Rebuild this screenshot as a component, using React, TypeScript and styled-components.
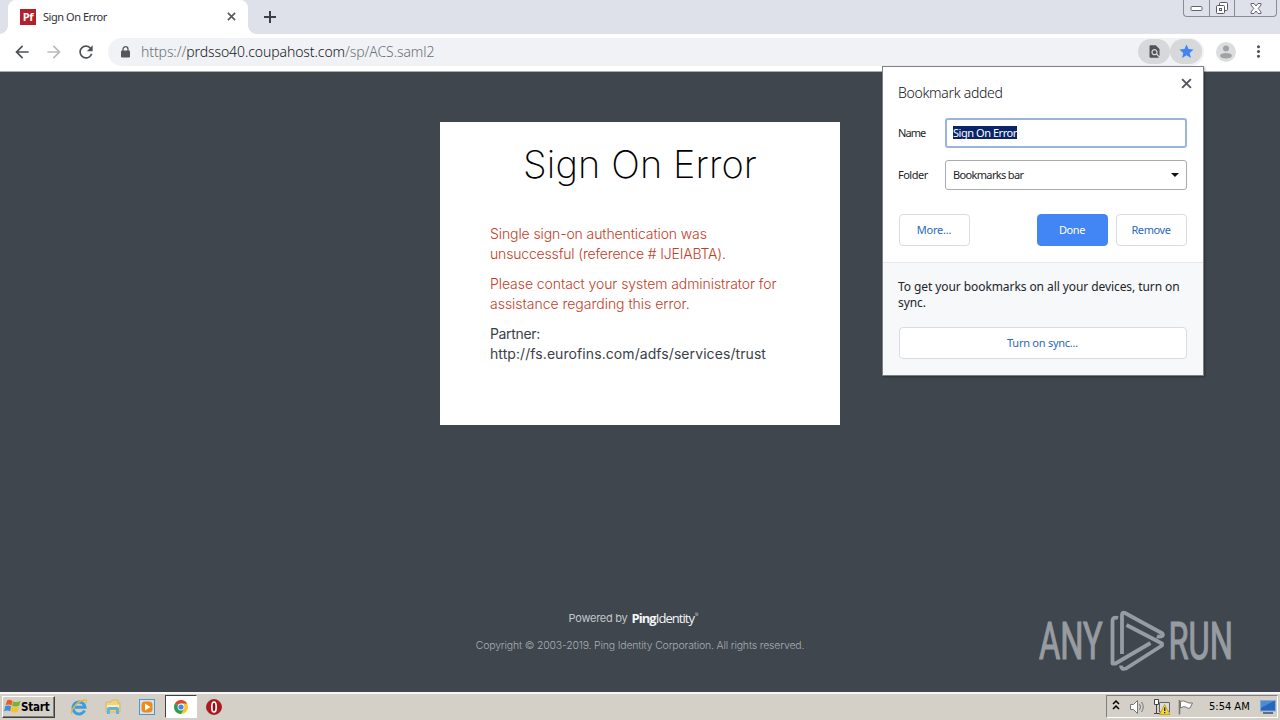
import { ReactNode } from 'react';
import styled, { createGlobalStyle } from 'styled-components';
import {
   MdArrowBack,
   MdArrowForward,
   MdFindInPage,
   MdMoreVert,
   MdRefresh,
   MdStar,
} from 'react-icons/md';

const uiFont = "'Noto Sans', 'Open Sans', sans-serif";
const pageFont = "'Inter', 'Open Sans', sans-serif";
const classicFont = "'DejaVu Sans Condensed', 'DejaVu Sans', sans-serif";

const GlobalStyle = createGlobalStyle`
   * { box-sizing: border-box; }
   body { margin: 0; overflow: hidden; }
   button { font: inherit; }
`;

const Screen = styled.div`
   width: 1280px;
   height: 720px;
   display: flex;
   flex-direction: column;
   position: relative;
   overflow: hidden;
   background: #3f464d;
   font-family: ${uiFont};
`;

const Text = styled.span<{ $spacing?: number }>`
   letter-spacing: ${({ $spacing = 0 }) => $spacing}px;
   white-space: nowrap;
`;

const CrossIcon = styled.svg<{ $size: number }>`
   width: ${({ $size }) => $size}px;
   height: ${({ $size }) => $size}px;
   flex: none;
   fill: none;
   stroke: #55595e;
   stroke-width: 1.8px;
`;

/* ---------- tab strip ---------- */

const TabStrip = styled.header`
   height: 34px;
   flex: none;
   display: flex;
   align-items: flex-start;
   background: #dee1e9;
   padding: 0 4px 0 8px;
`;

const Tab = styled.div`
   width: 240px;
   height: 34px;
   display: flex;
   align-items: center;
   padding: 0 12px 1px 12px;
   background: #fff;
   border-radius: 8px 8px 0 0;
   font-size: 11px;
   color: #2f3136;
   position: relative;

   &::before,
   &::after {
      content: '';
      position: absolute;
      bottom: 0;
      width: 8px;
      height: 8px;
   }
   &::before {
      left: -8px;
      background: radial-gradient(circle at 0 0, transparent 7.5px, #fff 8px);
   }
   &::after {
      right: -8px;
      background: radial-gradient(circle at 100% 0, transparent 7.5px, #fff 8px);
   }
   ${CrossIcon} {
      margin-left: auto;
   }
`;

const Favicon = styled.div`
   width: 16px;
   height: 16px;
   margin-right: 7px;
   background: #b3202c;
   color: #fff;
   font: bold 11px/16px 'Open Sans', sans-serif;
   text-align: center;
`;

const NewTab = styled.svg`
   width: 12px;
   height: 12px;
   margin: 11px auto 0 16px;
`;

const WindowButtons = styled.div`
   display: flex;
   width: 94px;
   height: 17px;
   border: 1px solid #878c98;
   border-top: 0;
   border-radius: 0 0 4px 4px;
   margin-right: -1px;
`;

const WindowButton = styled.div<{ $width: number }>`
   width: ${({ $width }) => $width}px;
   display: flex;
   justify-content: center;
   align-items: center;
   & + & {
      border-left: 1px solid #878c98;
   }
`;

/* ---------- toolbar ---------- */

const Toolbar = styled.nav`
   height: 38px;
   flex: none;
   display: flex;
   align-items: center;
   padding: 0 12px 2px;
   background: #fff;
   border-bottom: 1px solid #a9adb1;
`;

const NavIcon = styled.div<{ $muted?: boolean }>`
   width: 32px;
   display: flex;
   color: ${({ $muted }) => ($muted ? '#b9bbbd' : '#4e5256')};
   svg {
      width: 20px;
      height: 20px;
   }
`;

const AddressBar = styled.div`
   width: 1096px;
   height: 28px;
   display: flex;
   align-items: center;
   padding: 0 2px 0 11px;
   border-radius: 14px;
   background: #f0f2f5;
   font-size: 14px;
   font-weight: 300;
   color: #6c7075;
`;

const LockIcon = styled.svg`
   width: 9px;
   height: 12px;
   margin: 0 11px 0 2px;
`;

const Host = styled.span`
   color: #15171a;
`;

const Pills = styled.div`
   margin-left: auto;
   display: flex;
`;

const Pill = styled.div<{ $active?: boolean }>`
   width: 32px;
   height: 25px;
   display: flex;
   align-items: center;
   justify-content: center;
   border-radius: 13px;
   background: #d6d8da;
   color: ${({ $active }) => ($active ? '#4284f4' : '#505458')};
   svg {
      width: ${({ $active }) => ($active ? 17 : 15)}px;
      height: ${({ $active }) => ($active ? 17 : 15)}px;
   }
`;

const Avatar = styled.svg`
   width: 20px;
   height: 20px;
   margin-left: 12px;
`;

const Menu = styled(MdMoreVert)`
   width: 19px;
   height: 19px;
   margin-left: 13px;
   color: #505458;
   flex: none;
`;

/* ---------- page ---------- */

const Page = styled.main`
   height: 620px;
   flex: none;
   display: flex;
   flex-direction: column;
   align-items: center;
   padding-top: 50px;
   font-family: ${pageFont};
`;

const Card = styled.section`
   width: 400px;
   height: 303px;
   padding: 18px 50px 0;
   background: #fff;
`;

const CardTitle = styled.h1`
   margin: 0 0 36px;
   font-size: 38px;
   line-height: 48px;
   font-weight: 250;
   text-align: center;
   color: #000;
   white-space: nowrap;
`;

const Message = styled.p<{ $error?: boolean }>`
   margin: 0 0 10px;
   font-size: 14px;
   line-height: 20px;
   font-weight: ${({ $error }) => ($error ? 350 : 400)};
   color: ${({ $error }) => ($error ? '#c2401f' : '#3b4148')};
   ${Text} {
      display: block;
   }
`;

const PoweredBy = styled.div`
   margin: 185px 13px 0 0;
   height: 16px;
   display: flex;
   align-items: center;
   gap: 4px;
   font-size: 11px;
   color: #c3c6ca;
`;

const PingLogo = styled.span`
   display: flex;
   align-items: center;
   font: 400 13px/16px 'Open Sans', sans-serif;
   color: #f4f5f6;
   b {
      font-weight: 700;
   }
   sup {
      font-size: 4px;
      line-height: 4px;
      align-self: flex-start;
      margin: 3px 0 0 1px;
   }
`;

const Copyright = styled.div`
   margin-top: 12px;
   font-size: 10.5px;
   line-height: 16px;
   font-weight: 300;
   color: #a9adb2;
`;

/* ---------- bookmark bubble ---------- */

const Bubble = styled.aside`
   position: absolute;
   left: 882px;
   top: 66px;
   width: 322px;
   height: 310px;
   display: flex;
   flex-direction: column;
   background: #fff;
   border: 1px solid #7c8084;
   box-shadow: 1px 1px 2px rgba(0, 0, 0, 0.3);
   font-size: 11px;
   color: #222428;
`;

const BubbleBody = styled.div`
   height: 195px;
   padding: 9px 16px 0 15px;
`;

const BubbleHeader = styled.div`
   height: 42px;
   display: flex;
   justify-content: space-between;
   font-size: 14px;
   font-weight: 300;
   line-height: 34px;
   color: #111316;
   ${CrossIcon} {
      margin: 2px -5px 0 0;
   }
`;

const Field = styled.label`
   display: flex;
   align-items: center;
   height: 30px;
   margin-bottom: 12px;
`;

const FieldLabel = styled.span`
   width: 47px;
   padding-bottom: 2px;
`;

const FieldBox = styled.div<{ $focused?: boolean }>`
   flex: 1;
   height: 30px;
   display: flex;
   align-items: center;
   justify-content: space-between;
   padding: 0 7px 1px;
   border: ${({ $focused }) => ($focused ? '2px solid #9cb3dc' : '1px solid #a9abb0')};
   padding-left: ${({ $focused }) => ($focused ? 6 : 7)}px;
   border-radius: 3px;
`;

const Selected = styled.span`
   background: #0a246a;
   color: #fff;
   line-height: 13px;
   height: 13px;
`;

const Caret = styled.span`
   border: 4px solid transparent;
   border-top: 4px solid #111;
   border-bottom: 0;
`;

const Actions = styled.div`
   display: flex;
   gap: 8px;
   margin: 24px 0 0 1px;
`;

const Button = styled.button<{ $primary?: boolean; $wide?: boolean }>`
   width: ${({ $wide }) => ($wide ? '288px' : '71px')};
   height: 32px;
   padding: 0 1px 2px 0;
   border: 1px solid ${({ $primary }) => ($primary ? '#4285f4' : '#dadce0')};
   border-radius: 4px;
   background: ${({ $primary }) => ($primary ? '#4285f4' : '#fff')};
   color: ${({ $primary }) => ($primary ? '#fff' : '#2868bf')};
   &:first-child:not(:last-child) {
      margin-right: auto;
   }
`;

const SyncPromo = styled.div`
   flex: 1;
   padding: 16px 16px 0;
   border-top: 1px solid #e6e8ea;
   background: #f6f8fa;
   p {
      margin: 0 -10px 16px -1px;
      font-size: 12px;
      line-height: 16px;
   }
`;

/* ---------- watermark ---------- */

const Watermark = styled.svg`
   position: absolute;
   left: 1036px;
   top: 604px;
   width: 206px;
   height: 74px;
   opacity: 0.62;
`;

/* ---------- taskbar ---------- */

const Taskbar = styled.footer`
   height: 28px;
   flex: none;
   display: flex;
   align-items: center;
   padding: 0 2px 1px;
   background: #d4d0c8;
   border-top: 2px solid #f7f6f4;
   font-family: ${classicFont};
   font-size: 11px;
   color: #000;
`;

const StartButton = styled.div`
   width: 53px;
   height: 22px;
   display: flex;
   align-items: center;
   padding-left: 1px;
   border: 1px solid;
   border-color: #fff #404040 #404040 #fff;
   box-shadow: inset -1px -1px #808080;
   font-weight: bold;
   font-size: 11.5px;
`;

const QuickLaunch = styled.div`
   display: flex;
   margin-left: 8px;
`;

const TaskIcon = styled.div<{ $active?: boolean }>`
   width: 32px;
   height: 23px;
   margin-right: ${({ $active }) => ($active ? 1 : 2)}px;
   display: flex;
   align-items: center;
   justify-content: center;
   ${({ $active }) =>
      $active &&
      `background: #fff;
       border: 1px solid;
       border-color: #404040 #fff #fff #404040;`}
   svg {
      width: 18px;
      height: 18px;
   }
`;

const Tray = styled.div`
   width: 172px;
   height: 23px;
   margin-left: auto;
   display: flex;
   align-items: center;
   padding-left: 5px;
   border: 1px solid;
   border-color: #808080 #fff #fff #808080;
`;

const ExpandIcon = styled.svg`
   width: 8px;
   height: 12px;
   margin: 0 9px 3px 0;
`;

const TrayIcon = styled.svg`
   width: 18px;
   height: 18px;
   margin-right: 6px;
`;

const Clock = styled.div`
   margin-left: 8px;
   width: 51px;
`;

function Cross({ size }: { size: number }): JSX.Element {
   return (
      <CrossIcon $size={size} viewBox="0 0 10 10">
         <path d="M1 1L9 9M9 1L1 9" />
      </CrossIcon>
   );
}

function Launcher({ active, children }: { active?: boolean; children: ReactNode }): JSX.Element {
   return (
      <TaskIcon $active={active}>
         <svg viewBox="0 0 18 18">{children}</svg>
      </TaskIcon>
   );
}

function BrowserTabs(): JSX.Element {
   return (
      <TabStrip>
         <Tab>
            <Favicon>
               <Text $spacing={-0.3}>Pf</Text>
            </Favicon>
            <Text $spacing={-0.45}>Sign On Error</Text>
            <Cross size={9} />
         </Tab>
         <NewTab viewBox="0 0 12 12">
            <path d="M6 0V12M0 6H12" stroke="#3c4043" strokeWidth="2" />
         </NewTab>
         <WindowButtons>
            <WindowButton $width={25}>
               <svg width="13" height="6" viewBox="0 0 13 6">
                  <rect x="1" y="1.5" width="11" height="4" rx="1" fill="#fff" stroke="#60646e" />
               </svg>
            </WindowButton>
            <WindowButton $width={25}>
               <svg width="14" height="14" viewBox="0 0 14 14" fill="#fff" stroke="#555a65">
                  <rect x="4.5" y="1.5" width="8" height="8" rx="1" />
                  <rect x="1.5" y="4.5" width="8" height="8" rx="1" />
                  <rect x="4.5" y="7.5" width="2" height="2" />
               </svg>
            </WindowButton>
            <WindowButton $width={42}>
               <svg width="12" height="11" viewBox="0 0 12 11">
                  <path
                     d="M1 .5H4L6 3L8 .5H11V2L8.2 5.5L11 9V10.5H8L6 8L4 10.5H1V9L3.8 5.5L1 2Z"
                     fill="#fff"
                     stroke="#60646e"
                  />
               </svg>
            </WindowButton>
         </WindowButtons>
      </TabStrip>
   );
}

function BrowserToolbar(): JSX.Element {
   return (
      <Toolbar>
         <NavIcon>
            <MdArrowBack />
         </NavIcon>
         <NavIcon $muted>
            <MdArrowForward />
         </NavIcon>
         <NavIcon>
            <MdRefresh />
         </NavIcon>
         <AddressBar>
            <LockIcon viewBox="0 0 9 12">
               <rect y="4.500" width="9" height="7" rx="1" fill="#54585c" />
               <path d="M2 5V3.200A2.500 2.500 0 0 1 7 3.200V5" fill="none" stroke="#54585c" strokeWidth="1.300" />
            </LockIcon>
            <Text $spacing={-0.09}>
               https://<Host>prdsso40.coupahost.com</Host>/sp/ACS.saml2
            </Text>
            <Pills>
               <Pill>
                  <MdFindInPage />
               </Pill>
               <Pill $active>
                  <MdStar />
               </Pill>
            </Pills>
         </AddressBar>
         <Avatar viewBox="0 0 20 20">
            <circle cx="10" cy="10" r="10" fill="#dcdddf" />
            <circle cx="10" cy="6.5" r="3" fill="#a0a2a5" />
            <ellipse cx="10" cy="13.8" rx="6" ry="2.8" fill="#a0a2a5" />
         </Avatar>
         <Menu />
      </Toolbar>
   );
}

function BookmarkBubble(): JSX.Element {
   return (
      <Bubble>
         <BubbleBody>
            <BubbleHeader>
               <Text $spacing={-0.3}>Bookmark added</Text>
               <Cross size={11} />
            </BubbleHeader>
            <Field>
               <FieldLabel>
                  <Text $spacing={-0.9}>Name</Text>
               </FieldLabel>
               <FieldBox $focused>
                  <Selected>
                     <Text $spacing={-0.45}>Sign On Error</Text>
                  </Selected>
               </FieldBox>
            </Field>
            <Field>
               <FieldLabel>
                  <Text $spacing={-0.5}>Folder</Text>
               </FieldLabel>
               <FieldBox>
                  <Text $spacing={-0.65}>Bookmarks bar</Text>
                  <Caret />
               </FieldBox>
            </Field>
            <Actions>
               <Button>
                  <Text $spacing={-0.2}>More...</Text>
               </Button>
               <Button $primary>
                  <Text $spacing={-0.4}>Done</Text>
               </Button>
               <Button>
                  <Text $spacing={-0.4}>Remove</Text>
               </Button>
            </Actions>
         </BubbleBody>
         <SyncPromo>
            <p>
               <Text $spacing={-0.08}>
                  To get your bookmarks on all your devices, turn on
                  <br />
                  sync.
               </Text>
            </p>
            <Button $wide>
               <Text $spacing={-0.25}>Turn on sync...</Text>
            </Button>
         </SyncPromo>
      </Bubble>
   );
}

function AnyRunWatermark(): JSX.Element {
   return (
      <Watermark viewBox="0 -4 206 74">
         <g
            transform="scale(.627 1)"
            fontFamily="Roboto, sans-serif"
            fontSize="52"
            fill="#cdd0d6"
            stroke="#cdd0d6"
            strokeWidth="1.200"
         >
            <text x="4.800" y="51.300">
               ANY
            </text>
            <text x="211.300" y="51.300">
               RUN
            </text>
         </g>
         <g fill="none" stroke="#cdd0d6" strokeWidth="3.8" strokeLinejoin="round">
            <path d="M82 10Q76.500 8.500 76.500 13V55.500H79.500L114.500 35" />
            <path d="M86 46V7Q86 3.500 89 5L126.500 25.500Q128 29 122.500 28.700L121 28" />
            <path d="M90.500 17L126 35.500V37.500L90 60.500Q85 62 85 57.500" />
         </g>
      </Watermark>
   );
}

function WindowsTaskbar(): JSX.Element {
   return (
      <Taskbar>
         <StartButton>
            <svg width="17" height="17" viewBox="0 0 16 16">
               <path d="M3 2Q6 1 8 3L7 7Q4 5.500 1.500 6.800Z" fill="#ec5a29" />
               <path d="M8.600 3Q12 4.800 15.500 2.500L14.300 7.400Q11 8.800 7.600 7.200Z" fill="#76b52b" />
               <path d="M1.200 7.600Q4 6.400 6.800 7.800L5.800 12.500Q3 11 0 12.500Z" fill="#3e8fd8" />
               <path d="M7.500 8Q10.500 9.800 14 8.200L12.800 13Q9.500 14.300 6.400 12.700Z" fill="#f7c223" />
            </svg>
            <Text $spacing={-0.2}>Start</Text>
         </StartButton>
         <QuickLaunch>
            <Launcher>
               <path
                  d="M14.500 12.500A6 6 0 1 1 15 9.300H5"
                  fill="none"
                  stroke="#3b9fdf"
                  strokeWidth="3"
               />
               <path d="M2 16C-1 14 7 3 14 2C17 1.600 17 3 15.800 5" fill="none" stroke="#e2b93b" strokeWidth="1.300" />
            </Launcher>
            <Launcher>
               <path d="M2 4H7L8 2H14V5H16V14H2Z" fill="#f0d477" stroke="#c9a84c" strokeWidth=".6" />
               <path d="M3 7H15V10H3Z" fill="#f9eeb9" />
               <path d="M3 16V11Q3 9 5 9H13Q15 9 15 11V16H12V12H6V16Z" fill="#62b2dc" />
            </Launcher>
            <Launcher>
               <rect x="1.500" y="1.500" width="15" height="15" fill="#cfe5f5" stroke="#5593c8" />
               <rect x="3.500" y="3.500" width="11" height="11" rx="3.500" fill="#f08a17" />
               <path d="M7 5.500L12.500 9L7 12.500Z" fill="#fff" />
            </Launcher>
            <Launcher active>
               <circle cx="9" cy="9" r="7" fill="#f5c828" />
               <path d="M9 9L2.940 5.500A7 7 0 0 1 15.060 5.500H9Z" fill="#dc4437" />
               <path d="M9 9L2.940 5.500A7 7 0 0 0 9 16L12 10.700Z" fill="#2a9e56" />
               <circle cx="9" cy="9" r="3.400" fill="#fff" />
               <circle cx="9" cy="9" r="2.600" fill="#4285f4" />
            </Launcher>
            <Launcher>
               <circle cx="9" cy="9" r="7.600" fill="#b5161c" stroke="#801014" strokeWidth=".6" />
               <ellipse cx="9" cy="9" rx="2.200" ry="5" fill="#8e1115" stroke="#fff" strokeWidth="1.700" />
            </Launcher>
         </QuickLaunch>
         <Tray>
            <ExpandIcon viewBox="0 0 8 12">
               <path d="M1 5L4 2L7 5M1 10L4 7L7 10" fill="none" stroke="#000" strokeWidth="1.500" />
            </ExpandIcon>
            <TrayIcon viewBox="0 0 18 18" fill="#fff" stroke="#777" strokeWidth="1">
               <path d="M1.500 6.500H4.500L8.500 2.500V15.500L4.500 11.500H1.500Z" />
               <path d="M10.500 6Q12.500 9 10.500 12M12.500 4Q16 9 12.500 14" fill="none" />
            </TrayIcon>
            <TrayIcon viewBox="0 0 18 18">
               <path d="M6.500 4.500H16.500V14H6.500Z" fill="#ddd" stroke="#666" />
               <path d="M1.500 1.500H5.500V6.500H1.500ZM3.500 7V15M1 15.500H9" fill="#fff" stroke="#444" />
               <path d="M11.500 6.500L17 16.500H6.500Z" fill="#f8d720" stroke="#ad9416" strokeWidth=".7" />
               <path d="M11.700 9.500V13M11.700 14V15.200" stroke="#222" strokeWidth="1.300" />
            </TrayIcon>
            <TrayIcon viewBox="0 0 18 18">
               <path d="M3.500 3.500Q6 2 9.500 4Q11 5.500 15.500 5L13 10Q11 11 9 9Q6 8 3.500 10Z" fill="#fff" stroke="#777" />
               <path d="M2.500 2V16.500" stroke="#777" strokeWidth="1.600" />
            </TrayIcon>
            <Clock>
               <Text>5:54 AM</Text>
            </Clock>
            <svg width="16" height="14" viewBox="0 0 16 14">
               <rect x=".5" y=".5" width="15" height="10.500" fill="#2467bd" stroke="#88a8cc" />
               <path d="M1 1H14L1 8Z" fill="#4d8bd6" />
               <path d="M3 13H13" stroke="#334d72" strokeWidth="1.500" />
            </svg>
         </Tray>
      </Taskbar>
   );
}

export default function App(): JSX.Element {
   return (
      <Screen>
         <GlobalStyle />
         <BrowserTabs />
         <BrowserToolbar />
         <Page>
            <Card>
               <CardTitle>
                  <Text $spacing={0.1}>Sign On Error</Text>
               </CardTitle>
               <Message $error>
                  <Text $spacing={-0.1}>Single sign-on authentication was</Text>
                  <Text $spacing={-0.17}>unsuccessful (reference # IJEIABTA).</Text>
               </Message>
               <Message $error>
                  <Text $spacing={-0.07}>Please contact your system administrator for</Text>
                  <Text $spacing={-0.02}>assistance regarding this error.</Text>
               </Message>
               <Message>
                  <Text $spacing={-0.35}>Partner:</Text>
                  <Text $spacing={0.08}>http://fs.eurofins.com/adfs/services/trust</Text>
               </Message>
            </Card>
            <PoweredBy>
               <Text $spacing={-0.25}>Powered by</Text>
               <PingLogo>
                  <Text $spacing={-0.95}>
                     <b>Ping</b>Identity
                  </Text>
                  <sup>®</sup>
               </PingLogo>
            </PoweredBy>
            <Copyright>
               <Text $spacing={-0.18}>Copyright © 2003-2019. Ping Identity Corporation. All rights reserved.</Text>
            </Copyright>
         </Page>
         <BookmarkBubble />
         <AnyRunWatermark />
         <WindowsTaskbar />
      </Screen>
   );
}
